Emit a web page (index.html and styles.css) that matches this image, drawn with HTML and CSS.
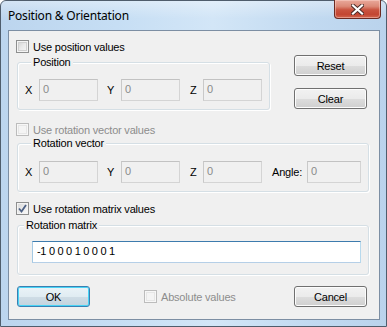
FILE: index.html
```html
<!DOCTYPE html>
<html>
<head>
<meta charset="utf-8">
<link rel="stylesheet" href="styles.css">
</head>
<body>
<div class="window">
  <div class="titlebar">
    <span class="title">Position &amp; Orientation</span>
    <div class="close">
      <svg width="13" height="11" viewBox="0 0 13 11">
        <path d="M2 1.5 L11 9.5 M11 1.5 L2 9.5" stroke="#4a2a26" stroke-width="4" stroke-linecap="square" fill="none"/>
        <path d="M2 1.5 L11 9.5 M11 1.5 L2 9.5" stroke="#ffffff" stroke-width="2.2" stroke-linecap="square" fill="none"/>
      </svg>
    </div>
  </div>
  <div class="client">
    <div class="sec1">
      <div class="left">
        <label class="check"><span class="box"></span><span>Use position values</span></label>
        <div class="group g1">
          <div class="gtitle">Position</div>
          <div class="row">
            <span class="lbl">X</span><span class="edit dis">0</span>
            <span class="lbl ly">Y</span><span class="edit dis">0</span>
            <span class="lbl lz">Z</span><span class="edit dis">0</span>
          </div>
        </div>
      </div>
      <div class="btns">
        <div class="btn">Reset</div>
        <div class="btn">Clear</div>
      </div>
    </div>
    <label class="check disabled c2"><span class="box"></span><span>Use rotation vector values</span></label>
    <div class="group g2">
      <div class="gtitle">Rotation vector</div>
      <div class="row">
        <span class="lbl">X</span><span class="edit dis">0</span>
        <span class="lbl ly">Y</span><span class="edit dis">0</span>
        <span class="lbl lz">Z</span><span class="edit dis">0</span>
        <span class="lbl la">Angle:</span><span class="edit dis small">0</span>
      </div>
    </div>
    <label class="check checked c3"><span class="box"><svg width="9" height="9" viewBox="0 0 9 9"><path d="M1 4.5 L3.5 7.5 L8 1" stroke="#4d6185" stroke-width="1.8" fill="none"/></svg></span><span>Use rotation matrix values</span></label>
    <div class="group g3">
      <div class="gtitle">Rotation matrix</div>
      <div class="edit active">-1 0 0 0 1 0 0 0 1</div>
    </div>
    <div class="bottom">
      <div class="btn default">OK</div>
      <label class="check disabled abs"><span class="box"></span><span>Absolute values</span></label>
      <div class="btn cancel">Cancel</div>
    </div>
  </div>
</div>
</body>
</html>
```

FILE: styles.css
```css
* { box-sizing: border-box; }
html, body { margin: 0; padding: 0; background: #ffffff; }
body { font-family: "Liberation Sans", Arial, sans-serif; font-size: 11px; color: #000; }

.window {
  width: 387px;
  height: 327px;
  border: 1px solid #4f5d6c;
  border-radius: 6px 6px 0 0;
  background: linear-gradient(90deg, #bcd5ee 0%, #c6def4 30%, #d3e6f7 55%, #c2daf1 80%, #bad3ec 100%);
  display: flex;
  flex-direction: column;
}

.titlebar {
  height: 29px;
  display: flex;
  justify-content: space-between;
  align-items: flex-start;
  background: linear-gradient(180deg, rgba(255,255,255,0.35) 0%, rgba(255,255,255,0) 60%);
  border-radius: 5px 5px 0 0;
}
.title {
  font-family: "Noto Sans", "Open Sans", sans-serif;
  font-size: 12px;
  color: #000;
  margin: 6px 0 0 7px;
  letter-spacing: -0.2px;
}
.close {
  width: 47px;
  height: 19px;
  margin: -1px 5px 0 0;
  border: 1px solid #6b2a22;
  border-top: none;
  border-radius: 0 0 4px 4px;
  background: linear-gradient(180deg, #e9a99b 0%, #dc8a78 35%, #c9533f 55%, #c34632 80%, #d2664f 100%);
  box-shadow: inset 0 0 0 1px rgba(255,220,210,0.45);
  display: flex;
  align-items: center;
  justify-content: center;
  padding-top: 1px;
}

.client {
  margin: 0 6px 6px 7px;
  height: 290px;
  border: 1px solid #7c8ea3;
  background: #f0f0f0;
  padding: 9px 12px 0 8px;
  display: flex;
  flex-direction: column;
}

.check {
  display: flex;
  align-items: center;
  gap: 4px;
  height: 13px;
  margin-left: -1px;
  letter-spacing: -0.2px;
}
.box {
  width: 13px;
  height: 13px;
  border: 1px solid #8e8f8f;
  background: linear-gradient(135deg, #cfcfcf 0%, #e9e9e9 50%, #f8f8f8 100%);
  box-shadow: inset 0 0 0 1px #f4f4f4, inset 0 0 0 2px #d0d0d0;
  display: flex;
  align-items: center;
  justify-content: center;
  flex: none;
}
.check.disabled { color: #8d8d8d; }
.check.disabled .box {
  border-color: #bcbcbc;
  background: #f4f4f4;
  box-shadow: inset 0 0 0 1px #f7f7f7, inset 0 0 0 2px #e6e6e6;
}
.check.checked .box {
  background: linear-gradient(135deg, #d8d8d8 0%, #eeeeee 60%, #fbfbfb 100%);
  box-shadow: inset 0 0 0 1px #f4f4f4;
}

.sec1 { display: flex; }
.left { width: 253px; }
.btns {
  margin-left: auto;
  padding-top: 15px;
  display: flex;
  flex-direction: column;
  gap: 12px;
}

.btn {
  width: 73px;
  height: 21px;
  border: 1px solid #707070;
  border-radius: 3px;
  background: linear-gradient(180deg, #f2f2f2 0%, #ebebeb 50%, #dddddd 51%, #cfcfcf 100%);
  box-shadow: inset 0 0 0 1px #fcfcfc;
  display: flex;
  align-items: center;
  justify-content: center;
  letter-spacing: -0.2px;
}
.btn.default {
  border-color: #3c7fb1;
  background: linear-gradient(180deg, #eaf3f8 0%, #e0ecf2 50%, #cfdde6 51%, #c3d3de 100%);
  box-shadow: inset 0 0 0 1px #48d4f6;
}

.group {
  border: 1px solid #d5dfe5;
  border-radius: 3px;
  box-shadow: inset 1px 1px 0 #ffffff, 1px 1px 0 #ffffff;
}
.gtitle {
  margin: -7px 0 0 6px;
  padding: 0 2px;
  height: 13px;
  line-height: 13px;
  background: #f0f0f0;
  width: fit-content;
  letter-spacing: -0.2px;
}
.row { display: flex; align-items: center; }

.lbl { width: 14px; flex: none; }
.ly { margin-left: 9px; }
.lz { margin-left: 10px; width: 13px; }
.la { margin-left: 10px; width: 35px; letter-spacing: -0.2px; }

.edit {
  width: 59px;
  height: 22px;
  border: 1px solid #b5b5b5;
  padding: 0 0 0 3px;
  line-height: 18px;
  flex: none;
}
.edit.dis { background: #f0f0f0; color: #8a8a8a; border-color: #c2c2c2 #d4d4d4 #d4d4d4 #c9c9c9; }
.edit.small { width: 54px; }
.edit.active {
  width: 329px;
  background: #ffffff;
  border-color: #3d7bad #b7d9ed #b5cfe7 #a4c9e3;
  margin: 9px 0 0 14px;
  padding-left: 4px;
  letter-spacing: -0.3px;
}

.g1 { margin-top: 9px; height: 48px; padding-left: 7px; }
.g1 .row { margin-top: 10px; }

.c2 { margin-top: 13px; }
.g2 { margin-top: 7px; width: 352px; height: 49px; padding-left: 7px; }
.g2 .row { margin-top: 11px; }

.c3 { margin-top: 10px; }
.g3 { margin-top: 10px; width: 352px; height: 50px; }

.bottom { display: flex; align-items: center; margin-top: 11px; }
.abs { margin-left: 54px; }
.cancel { margin-left: auto; }
```
